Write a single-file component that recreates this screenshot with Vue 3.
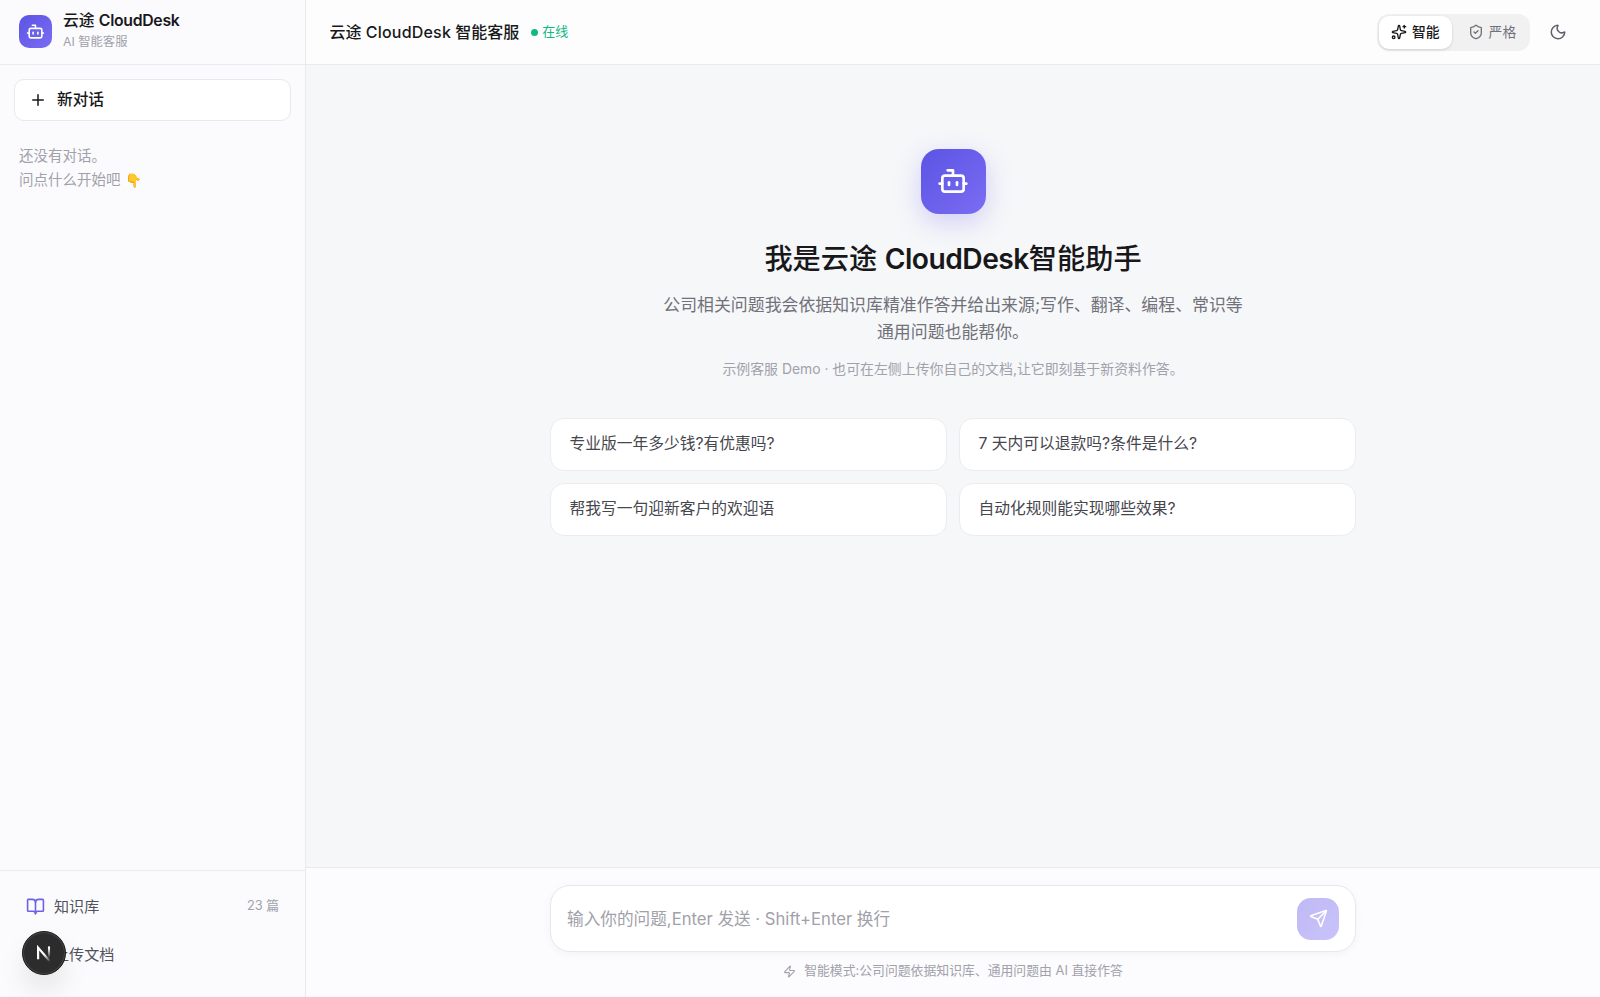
<template>
  <div class="app-shell">
    <aside class="sidebar">
      <div class="brand">
        <div class="logo logo-sm">
          <svg class="icon" viewBox="0 0 24 24" width="19" height="19"><path v-for="d in ICONS.bot" :key="d" :d="d" /></svg>
        </div>
        <div class="brand-text">
          <span class="brand-name">云途 <span class="latin">CloudDesk</span></span>
          <span class="brand-sub">AI 智能客服</span>
        </div>
      </div>

      <div class="history">
        <button class="new-chat" @click="question = ''">
          <svg class="icon" viewBox="0 0 24 24" width="18" height="18"><path d="M5 12h14M12 5v14" /></svg>
          <span>新对话</span>
        </button>
        <p class="history-empty">还没有对话。<br>问点什么开始吧 <span class="emoji">👇</span></p>
      </div>

      <div class="sidebar-footer">
        <button class="side-item">
          <svg class="icon accent" viewBox="0 0 24 24" width="19" height="19"><path v-for="d in ICONS.book" :key="d" :d="d" /></svg>
          <span>知识库</span>
          <span class="count">{{ docCount }} 篇</span>
        </button>
        <button class="side-item">
          <svg class="icon accent" viewBox="0 0 24 24" width="19" height="19"><path v-for="d in ICONS.upload" :key="d" :d="d" /></svg>
          <span>上传文档</span>
        </button>
      </div>

      <div class="dev-badge">
        <svg viewBox="0 0 40 40" width="40" height="40">
          <defs>
            <linearGradient id="stem" x1="0" y1="15" x2="0" y2="25" gradientUnits="userSpaceOnUse">
              <stop offset="0" stop-color="#fff" />
              <stop offset="1" stop-color="#fff" stop-opacity="0" />
            </linearGradient>
            <linearGradient id="slash" x1="21" y1="21" x2="27" y2="28" gradientUnits="userSpaceOnUse">
              <stop offset="0" stop-color="#fff" />
              <stop offset="1" stop-color="#fff" stop-opacity="0" />
            </linearGradient>
          </defs>
          <path d="M14.1 26.2V14.6L25.6 28" fill="none" stroke="url(#slash)" stroke-width="2.2" />
          <path d="M25 13.4v12" fill="none" stroke="url(#stem)" stroke-width="2.1" />
        </svg>
      </div>
    </aside>

    <main class="main">
      <header class="topbar">
        <h1>云途 <span class="latin">CloudDesk</span> 智能客服</h1>
        <span class="online"><i></i>在线</span>
        <div class="mode-switch">
          <button
            v-for="m in modes"
            :key="m.id"
            :class="{ active: mode === m.id }"
            @click="mode = m.id"
          >
            <svg class="icon" viewBox="0 0 24 24" width="16" height="16">
              <path v-for="d in m.icon" :key="d" :d="d" />
              <circle v-if="m.id === 'smart'" cx="4" cy="20" r="2" />
            </svg>
            <span>{{ m.label }}</span>
          </button>
        </div>
        <button class="theme-btn">
          <svg class="icon" viewBox="0 0 24 24" width="18" height="18"><path :d="ICONS.moon" /></svg>
        </button>
      </header>

      <section class="welcome">
        <div class="logo logo-lg">
          <svg class="icon" viewBox="0 0 24 24" width="32" height="32"><path v-for="d in ICONS.bot" :key="d" :d="d" /></svg>
        </div>
        <h2>我是云途 <span class="latin">CloudDesk</span>智能助手</h2>
        <p class="intro">公司相关问题我会依据知识库精准作答并给出来源;写作、翻译、编程、常识等<br>通用问题也能帮你。</p>
        <p class="note">示例客服 Demo · 也可在左侧上传你自己的文档,让它即刻基于新资料作答。</p>
        <div class="suggestions">
          <button v-for="s in suggestions" :key="s" @click="question = s">{{ s }}</button>
        </div>
      </section>

      <footer class="composer">
        <div class="input-box">
          <input v-model="question" placeholder="输入你的问题,Enter 发送 · Shift+Enter 换行">
          <button class="send" :class="{ disabled: !question }">
            <svg class="icon" viewBox="0 0 24 24" width="19" height="19"><path v-for="d in ICONS.send" :key="d" :d="d" /></svg>
          </button>
        </div>
        <p class="hint">
          <svg class="icon" viewBox="0 0 24 24" width="13" height="13"><path :d="ICONS.zap" /></svg>
          智能模式:公司问题依据知识库、通用问题由 AI 直接作答
        </p>
      </footer>
    </main>
  </div>
</template>

<script setup>
import { ref } from 'vue'

const ICONS = {
  bot: ['M12 8V4H8', 'M6 8h12a2 2 0 0 1 2 2v8a2 2 0 0 1-2 2H6a2 2 0 0 1-2-2v-8a2 2 0 0 1 2-2z', 'M2 14h2', 'M20 14h2', 'M15 13v2', 'M9 13v2'],
  book: ['M12 7v14', 'M3 18a1 1 0 0 1-1-1V4a1 1 0 0 1 1-1h5a4 4 0 0 1 4 4 4 4 0 0 1 4-4h5a1 1 0 0 1 1 1v13a1 1 0 0 1-1 1h-6a3 3 0 0 0-3 3 3 3 0 0 0-3-3z'],
  upload: ['M12 3v12', 'm17 8-5-5-5 5', 'M21 15v4a2 2 0 0 1-2 2H5a2 2 0 0 1-2-2v-4'],
  sparkles: ['M11.017 2.814a1 1 0 0 1 1.966 0l1.051 5.558a2 2 0 0 0 1.594 1.594l5.558 1.051a1 1 0 0 1 0 1.966l-5.558 1.051a2 2 0 0 0-1.594 1.594l-1.051 5.558a1 1 0 0 1-1.966 0l-1.051-5.558a2 2 0 0 0-1.594-1.594l-5.558-1.051a1 1 0 0 1 0-1.966l5.558-1.051a2 2 0 0 0 1.594-1.594z', 'M20 2v4', 'M22 4h-4'],
  shield: ['M20 13c0 5-3.5 7.5-7.66 8.95a1 1 0 0 1-.67-.01C7.5 20.5 4 18 4 13V6a1 1 0 0 1 1-1c2 0 4.5-1.2 6.24-2.72a1.17 1.17 0 0 1 1.52 0C14.51 3.81 17 5 19 5a1 1 0 0 1 1 1z', 'm9 12 2 2 4-4'],
  moon: 'M20.985 12.486a9 9 0 1 1-9.473-9.472c.405-.022.617.46.402.803a6 6 0 0 0 8.268 8.268c.344-.215.825-.004.803.401',
  send: ['M14.536 21.686a.5.5 0 0 0 .937-.024l6.5-19a.496.496 0 0 0-.635-.635l-19 6.5a.5.5 0 0 0-.024.937l7.93 3.18a2 2 0 0 1 1.112 1.11z', 'm21.854 2.147-10.94 10.939'],
  zap: 'M4 14a1 1 0 0 1-.78-1.63l9.9-10.2a.5.5 0 0 1 .86.46l-1.92 6.02A1 1 0 0 0 13 10h7a1 1 0 0 1 .78 1.63l-9.9 10.2a.5.5 0 0 1-.86-.46l1.92-6.02A1 1 0 0 0 11 14z'
}

const modes = [
  { id: 'smart', label: '智能', icon: ICONS.sparkles },
  { id: 'strict', label: '严格', icon: ICONS.shield }
]

const suggestions = [
  '专业版一年多少钱?有优惠吗?',
  '7 天内可以退款吗?条件是什么?',
  '帮我写一句迎新客户的欢迎语',
  '自动化规则能实现哪些效果?'
]

const mode = ref('smart')
const question = ref('')
const docCount = ref(23)
</script>

<style>
body { margin: 0; }
</style>

<style scoped>
.app-shell {
  display: flex;
  height: 100vh;
  overflow: hidden;
  background: #f6f7f9;
  color: #18181b;
  font-family: Inter, "Noto Sans CJK SC", sans-serif;
}
.app-shell * { box-sizing: border-box; }
button, input { font: inherit; color: inherit; border: none; background: none; padding: 0; }
button { cursor: pointer; white-space: nowrap; }
h1, h2, p { margin: 0; }

.icon {
  display: block;
  flex-shrink: 0;
  fill: none;
  stroke: currentColor;
  stroke-width: 2;
  stroke-linecap: round;
  stroke-linejoin: round;
}

/* === SIDEBAR === */
.sidebar {
  position: relative;
  display: flex;
  flex-direction: column;
  width: 306px;
  flex-shrink: 0;
  background: #fbfbfe;
  border-right: 1px solid #e9e9ee;
}
.brand {
  display: flex;
  align-items: center;
  gap: 11px;
  height: 65px;
  padding: 0 19px 1px;
  border-bottom: 1px solid #ebebef;
}
.logo {
  display: flex;
  align-items: center;
  justify-content: center;
  flex-shrink: 0;
  color: white;
  background: linear-gradient(135deg, #5b54e4, #7b6cf3);
}
.logo-sm { width: 33px; height: 33px; border-radius: 10px; }
.brand-text { display: flex; flex-direction: column; padding-bottom: 1px; }
.brand-name { font-size: 15.8px; line-height: 22px; font-weight: 500; }
.brand-name .latin { font-weight: 600; letter-spacing: -0.3px; }
.brand-sub { font-size: 12.3px; line-height: 20px; color: #a1a1aa; }

.history { flex: 1; padding: 14px; }
.new-chat {
  display: flex;
  align-items: center;
  gap: 10px;
  width: 277px;
  height: 42px;
  padding: 0 14px 1px;
  font-size: 15.7px;
  font-weight: 500;
  background: white;
  border: 1px solid #e9e9ed;
  border-radius: 10px;
}
.new-chat span { padding-bottom: 2px; }
.history-empty { padding: 23px 5px; font-size: 14.5px; line-height: 23.6px; color: #a1a1aa; }
.emoji { font-size: 13.5px; }

.sidebar-footer {
  height: 127px;
  padding: 11px 14px;
  border-top: 1px solid #ebebef;
}
.side-item {
  display: flex;
  align-items: center;
  gap: 9px;
  width: 100%;
  height: 48.5px;
  padding: 0 12px;
  font-size: 15.1px;
  color: #52525b;
}
.side-item span { padding-bottom: 3px; }
.accent { color: #6a61e8; }
.side-item .count { margin-left: auto; font-size: 12.8px; color: #a1a1aa; }

/* floats over the upload entry */
.dev-badge {
  position: absolute;
  left: 22px;
  bottom: 22px;
  display: flex;
  align-items: center;
  justify-content: center;
  width: 44px;
  height: 44px;
  border-radius: 50%;
  background: #2c2c2c;
  border: 1px solid #1a1a1a;
  box-shadow: inset 0 0 0 1px #484848, 0 16px 32px -8px rgba(0, 0, 0, 0.2);
}

/* === TOPBAR === */
.main { display: flex; flex-direction: column; flex: 1; min-width: 0; }
.topbar {
  display: flex;
  align-items: center;
  height: 65px;
  padding: 0 33px 0 23.5px;
  background: #fdfdfe;
  border-bottom: 1px solid #e9e9ee;
}
.topbar h1 { padding-bottom: 2px; font-size: 16px; font-weight: 500; }
.topbar .latin { letter-spacing: 0.2px; }
.online {
  display: flex;
  align-items: center;
  gap: 4px;
  margin-left: 12px;
  padding-bottom: 1px;
  font-size: 13px;
  line-height: 19px;
  color: #10b981;
}
.online i { width: 7px; height: 7px; margin-top: 1px; border-radius: 50%; background: #10b981; }

.mode-switch {
  display: flex;
  margin-left: auto;
  width: 153px;
  height: 37px;
  padding: 2px;
  border-radius: 12px;
  background: #f1f1f2;
}
.mode-switch button {
  display: flex;
  align-items: center;
  gap: 5px;
  padding: 0 12px;
  font-size: 13.8px;
  color: #71717a;
  border-radius: 10px;
}
.mode-switch button span { padding-bottom: 2px; }
.mode-switch button + button { padding-left: 16px; }
.mode-switch .active {
  color: #18181b;
  font-weight: 500;
  background: white;
  box-shadow: 0 1px 3px rgba(0, 0, 0, 0.14);
}
.theme-btn { margin-left: 19px; color: #60606b; }

/* === WELCOME === */
.welcome {
  display: flex;
  flex-direction: column;
  align-items: center;
  flex: 1;
  padding-top: 83.5px;
}
.logo-lg {
  width: 65px;
  height: 65px;
  border-radius: 18px;
  box-shadow: 0 8px 26px rgba(99, 88, 235, 0.25);
}
.welcome h2 { margin-top: 24px; font-size: 28.2px; line-height: 42px; font-weight: 500; white-space: nowrap; }
.welcome h2 .latin { font-weight: 600; letter-spacing: -0.5px; }
.intro { margin-top: 12.5px; font-size: 16.9px; line-height: 27.4px; text-align: center; color: #71717a; }
.note { margin-top: 12px; font-size: 13.9px; line-height: 21px; color: #a1a1aa; }
.suggestions {
  display: grid;
  grid-template-columns: 1fr 1fr;
  gap: 12px;
  width: 806px;
  margin-top: 38px;
}
.suggestions button {
  height: 53px;
  padding: 0 18.5px 3px;
  font-size: 15.75px;
  text-align: left;
  color: #46464e;
  background: white;
  border: 1px solid #ececf0;
  border-radius: 14px;
}

/* === COMPOSER === */
.composer {
  height: 130px;
  padding-top: 17px;
  border-top: 1px solid #e9e9ed;
  background: #fcfcfe;
}
.input-box {
  display: flex;
  align-items: center;
  width: 806px;
  height: 67px;
  margin: 0 auto;
  padding: 0 16px;
  background: white;
  border: 1px solid #e8e8ec;
  border-radius: 20px;
  box-shadow: 0 2px 8px rgba(0, 0, 0, 0.04);
}
.input-box input { flex: 1; height: 40px; font-size: 16.65px; outline: none; }
.input-box input::placeholder { color: #a1a1aa; opacity: 1; }
.send {
  display: flex;
  align-items: center;
  justify-content: center;
  width: 42px;
  height: 42px;
  border-radius: 14px;
  color: white;
  background: linear-gradient(135deg, #5b54e4, #7b6cf3);
}
.send.disabled { background: linear-gradient(135deg, #beb9f5, #cac3fa); }
.hint {
  display: flex;
  align-items: center;
  justify-content: center;
  gap: 8px;
  margin-top: 9px;
  font-size: 12.85px;
  line-height: 20px;
  color: #a1a1aa;
}
</style>
